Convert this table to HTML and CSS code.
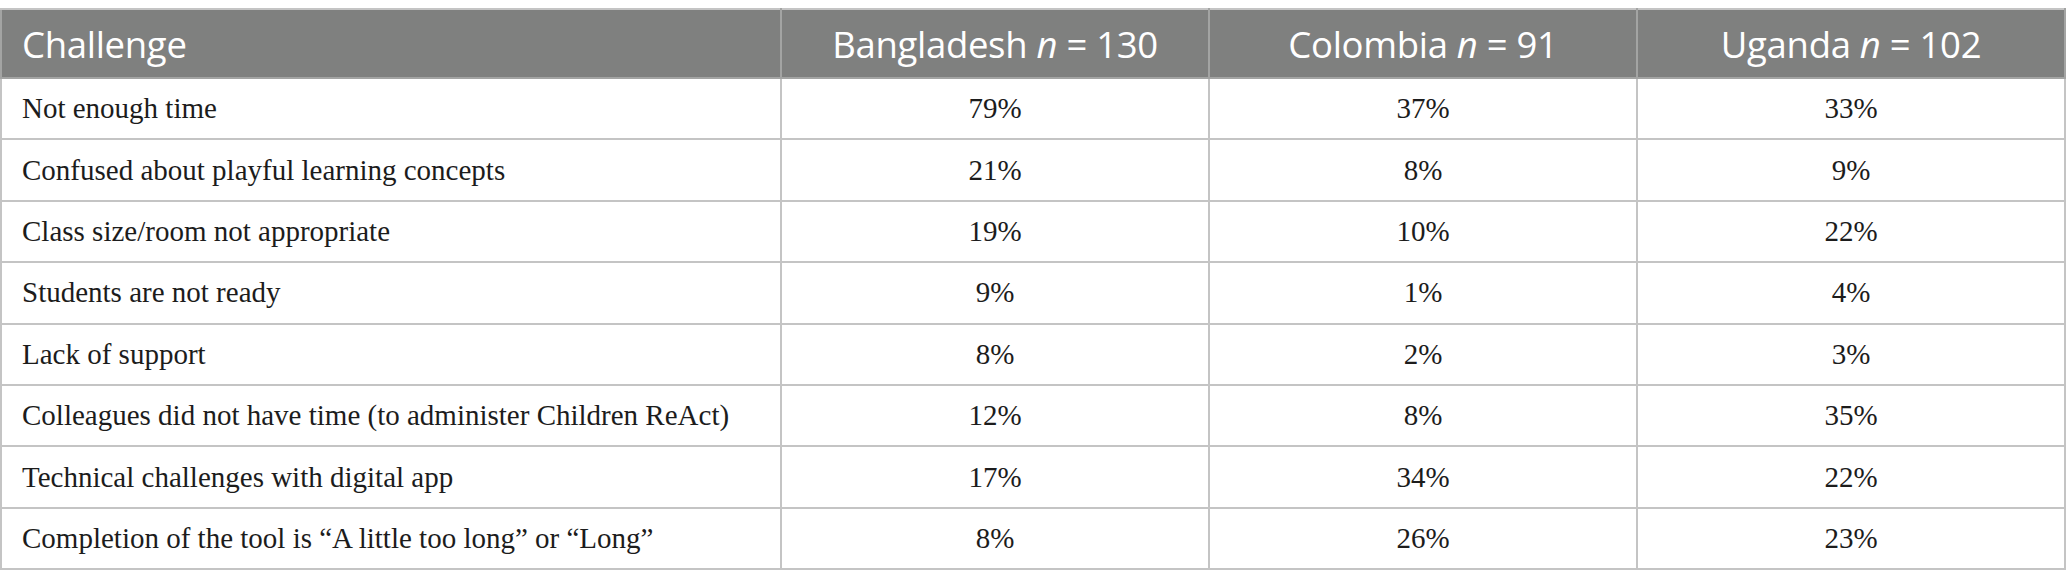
FILE: index.html
```html
<!DOCTYPE html>
<html>
<head>
<meta charset="utf-8">
<link rel="stylesheet" href="styles.css">
</head>
<body>
<table class="data">
  <colgroup>
    <col class="c-first">
    <col class="c-num">
    <col class="c-num">
    <col class="c-num">
  </colgroup>
  <thead>
    <tr class="head-row">
      <th class="h-left">Challenge</th>
      <th>Bangladesh <i>n</i> = 130</th>
      <th>Colombia <i>n</i> = 91</th>
      <th>Uganda <i>n</i> = 102</th>
    </tr>
  </thead>
  <tbody>
    <tr><td class="label">Not enough time</td><td>79%</td><td>37%</td><td>33%</td></tr>
    <tr><td class="label">Confused about playful learning concepts</td><td>21%</td><td>8%</td><td>9%</td></tr>
    <tr><td class="label">Class size/room not appropriate</td><td>19%</td><td>10%</td><td>22%</td></tr>
    <tr><td class="label">Students are not ready</td><td>9%</td><td>1%</td><td>4%</td></tr>
    <tr><td class="label">Lack of support</td><td>8%</td><td>2%</td><td>3%</td></tr>
    <tr><td class="label">Colleagues did not have time (to administer Children ReAct)</td><td>12%</td><td>8%</td><td>35%</td></tr>
    <tr><td class="label">Technical challenges with digital app</td><td>17%</td><td>34%</td><td>22%</td></tr>
    <tr><td class="label">Completion of the tool is “A little too long” or “Long”</td><td>8%</td><td>26%</td><td>23%</td></tr>
  </tbody>
</table>
</body>
</html>
```
FILE: styles.css
```css
html, body {
  margin: 0;
  padding: 0;
  background: #ffffff;
}
body {
  padding-top: 8px;
}
.data {
  width: 2066px;
  table-layout: fixed;
  border-collapse: collapse;
  border: 2px solid #c4c4c4;
}
.c-first { width: 780px; }
.c-num { width: 428px; }
.head-row {
  height: 69px;
  background: #7f807f;
}
.head-row th {
  font-family: "Open Sans", "Liberation Sans", sans-serif;
  font-weight: 400;
  font-size: 36.5px;
  letter-spacing: -0.3px;
  color: #ffffff;
  text-align: center;
  border: 2px solid #a3a4a3;
  border-top-color: #c4c4c4;
  padding: 0 20px;
  white-space: nowrap;
}
.head-row th.h-left {
  text-align: left;
}
tbody tr {
  height: 61.4px;
}
td {
  font-family: "Liberation Serif", "Times New Roman", serif;
  font-size: 29px;
  color: #1c1c1c;
  text-align: center;
  border: 2px solid #c4c4c4;
  padding: 0 20px;
  white-space: nowrap;
}
td.label {
  text-align: left;
}
```
